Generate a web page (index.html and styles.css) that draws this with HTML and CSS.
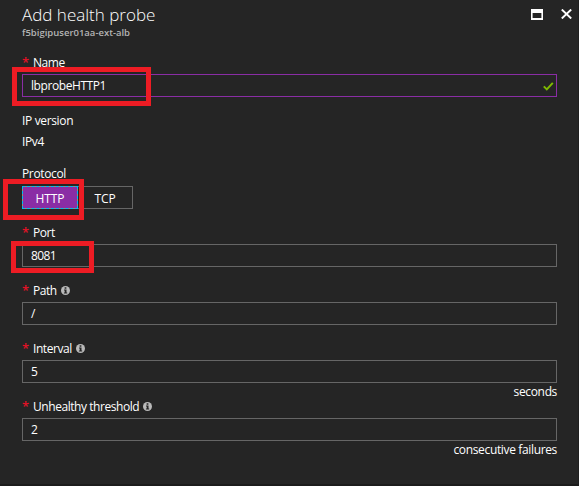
FILE: index.html
```html
<!DOCTYPE html>
<html lang="en">
<head>
<meta charset="utf-8">
<title>Add health probe</title>
<link rel="stylesheet" href="styles.css">
</head>
<body>
<svg class="defs" width="0" height="0"><symbol id="info" viewBox="0 0 9 9"><circle cx="4.5" cy="4.5" r="4.5" fill="#b9b9b9"/><path d="M3.6 1.3h1.8v1.4H3.6zM3 3.6h2.5v3h.7v1H2.9v-1h.8v-2H3z" fill="#252525"/></symbol></svg>
<main class="blade">
  <header class="header">
    <div>
      <h1 class="title">Add health probe</h1>
      <p class="subtitle">f5bigipuser01aa-ext-alb</p>
    </div>
    <div class="actions">
      <svg width="12" height="11" viewBox="0 0 12 11"><path fill="#fff" fill-rule="evenodd" d="M0 0h12v11H0zM1.6 4v5h8.8V4z"/></svg>
      <svg width="11" height="10" viewBox="0 0 11 10"><path d="M.8.5l9.4 9M10.2.5l-9.4 9" stroke="#fff" stroke-width="1.9"/></svg>
    </div>
  </header>
  <section class="field">
    <div class="label"><b class="star">*</b><span>Name</span></div>
    <div class="input valid"><span class="t-value">lbprobeHTTP1</span>
      <svg width="11" height="9" viewBox="0 0 11 9"><path d="M.8 4.4l3 3L9.8 .8" fill="none" stroke="#7fba00" stroke-width="2"/></svg>
    </div>
    <i class="mark mark-name"></i>
  </section>
  <section class="info">
    <div class="line">IP version</div>
    <div class="line">IPv4</div>
  </section>
  <section class="protocol">
    <div class="line">Protocol</div>
    <div class="options"><div class="option on">HTTP</div><div class="option">TCP</div></div>
    <i class="mark mark-http"></i>
  </section>
  <section class="field">
    <div class="label"><b class="star">*</b><span>Port</span></div>
    <div class="input"><span class="t-port">8081</span></div>
    <i class="mark mark-port"></i>
  </section>
  <section class="field">
    <div class="label"><b class="star">*</b><span>Path</span><svg class="hint"><use href="#info"/></svg></div>
    <div class="input"><span>/</span></div>
  </section>
  <section class="field">
    <div class="label"><b class="star">*</b><span>Interval</span><svg class="hint"><use href="#info"/></svg></div>
    <div class="input"><span>5</span></div>
    <div class="unit">seconds</div>
  </section>
  <section class="field">
    <div class="label"><b class="star">*</b><span>Unhealthy threshold</span><svg class="hint"><use href="#info"/></svg></div>
    <div class="input"><span>2</span></div>
    <div class="unit">consecutive failures</div>
  </section>
</main>
</body>
</html>
```
FILE: styles.css
```css
* { box-sizing: border-box; }
body { margin: 0; background: #252525; color: #fff; font: 12px/16px "Open Sans", "Noto Sans", sans-serif; letter-spacing: -0.3px; }
.defs { display: block; height: 0; }
.blade { height: 486px; padding: 0 21px 0 22px; border-bottom: 2px solid #1c1c1c; border-right: 1px solid #1f1f1f; overflow: hidden; }
.header { display: flex; justify-content: space-between; height: 54px; padding-top: 3px; }
.title { margin: 0; font-size: 17px; line-height: 24px; font-weight: 300; letter-spacing: 0; }
.subtitle { margin: 0; font-size: 9.5px; line-height: 12px; font-weight: 600; color: #b4b4b4; letter-spacing: 0; }
.actions { display: flex; gap: 18px; margin: 6px -15px 0 0; }
.field { position: relative; height: 58px; width: 535px; }
.label { display: flex; align-items: center; height: 20px; padding-bottom: 2px; letter-spacing: -0.44px; }
.star { width: 11px; color: #e01226; font-weight: 600; font-size: 13px; padding-bottom: 2px; }
.hint { width: 9px; height: 9px; margin: 0 0 1px 4px; }
.input { display: flex; align-items: center; justify-content: space-between; height: 23px; padding: 1px 2px 0 8px; border: 1px solid #666; }
.valid { border-color: #8a2da5; }
.t-value { letter-spacing: -0.42px; }
.t-port { letter-spacing: -0.6px; }
.unit { text-align: right; line-height: 16px; padding-top: 1px; letter-spacing: -0.35px; }
.info { height: 54px; padding-top: 1px; }
.line { height: 21px; line-height: 16px; letter-spacing: -0.35px; }
.protocol { position: relative; height: 58px; }
.protocol .line { height: 20px; }
.options { display: flex; }
.option { display: flex; align-items: center; justify-content: center; width: 56px; height: 23px; padding-top: 2px; border: 1px solid #666; border-left: 0; letter-spacing: -0.1px; }
.option.on { background: #8a2da5; border: 1px solid #a08878; outline: 1px dashed #00b9f2; outline-offset: -1px; }
.option + .option { width: 55px; }
.mark { position: absolute; border: 5px solid #ed1c24; }
.mark-name { left: -10px; top: 13px; width: 139px; height: 39px; }
.mark-http { left: -19px; top: 13px; width: 81px; height: 41px; }
.mark-port { left: -11px; top: 17px; width: 83px; height: 32px; }
```
